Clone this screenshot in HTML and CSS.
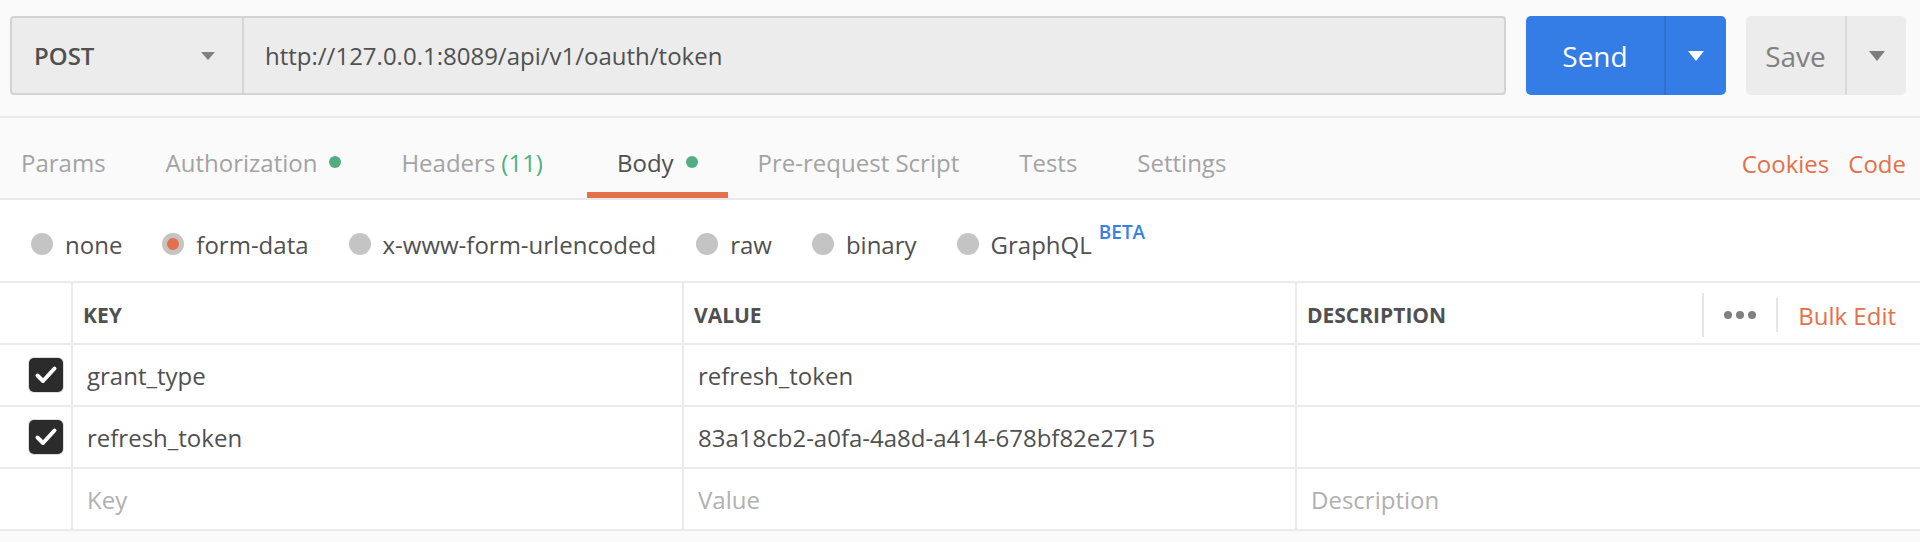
FILE: index.html
```html
<!DOCTYPE html>
<html lang="en">
<head>
<meta charset="utf-8">
<title>Request</title>
<link rel="stylesheet" href="styles.css">
</head>
<body>
<div class="app">
  <div class="request-bar">
    <div class="url-group">
      <div class="method">
        <span class="method-name">POST</span>
        <svg class="caret" width="14" height="8" viewBox="0 0 14 8"><path d="M0 0H14L7 8Z" fill="#808080"/></svg>
      </div>
      <div class="url">http://127.0.0.1:8089/api/v1/oauth/token</div>
    </div>
    <div class="split-btn send">
      <span class="btn-main">Send</span>
      <span class="btn-caret"><svg width="16" height="10" viewBox="0 0 16 10"><path d="M0 0H16L8 10Z" fill="#ffffff"/></svg></span>
    </div>
    <div class="split-btn save">
      <span class="btn-main">Save</span>
      <span class="btn-caret"><svg width="16" height="10" viewBox="0 0 16 10"><path d="M0 0H16L8 10Z" fill="#7d7d7d"/></svg></span>
    </div>
  </div>

  <div class="tabs">
    <div class="tab tab-first">Params</div>
    <div class="tab">Authorization<span class="dot"></span></div>
    <div class="tab">Headers <span class="count">(11)</span></div>
    <div class="tab tab-active">Body<span class="dot"></span></div>
    <div class="tab">Pre-request Script</div>
    <div class="tab">Tests</div>
    <div class="tab">Settings</div>
    <div class="tab-links">
      <span class="link">Cookies</span>
      <span class="link">Code</span>
    </div>
  </div>

  <div class="body-types">
    <div class="radio-item"><span class="radio"></span>none</div>
    <div class="radio-item"><span class="radio radio-on"></span>form-data</div>
    <div class="radio-item"><span class="radio"></span>x-www-form-urlencoded</div>
    <div class="radio-item"><span class="radio"></span>raw</div>
    <div class="radio-item"><span class="radio"></span>binary</div>
    <div class="radio-item"><span class="radio"></span>GraphQL<sup class="beta">BETA</sup></div>
  </div>

  <div class="kv-table">
    <div class="cell cell-check head"></div>
    <div class="cell head">KEY</div>
    <div class="cell head">VALUE</div>
    <div class="cell head cell-last head-desc">
      <span>DESCRIPTION</span>
      <div class="head-actions">
        <span class="sep"></span>
        <svg class="more" width="32" height="10" viewBox="0 0 32 10"><circle cx="4" cy="5" r="4" fill="#808080"/><circle cx="16" cy="5" r="4" fill="#808080"/><circle cx="28" cy="5" r="4" fill="#808080"/></svg>
        <span class="sep sep-short"></span>
        <span class="bulk">Bulk Edit</span>
      </div>
    </div>

    <div class="cell cell-check"><span class="checkbox"><svg width="34" height="34" viewBox="0 0 34 34"><path d="M8.5 17.5L14 23L25.5 10.5" fill="none" stroke="#ffffff" stroke-width="4" stroke-linecap="round" stroke-linejoin="round"/></svg></span></div>
    <div class="cell">grant_type</div>
    <div class="cell">refresh_token</div>
    <div class="cell cell-last"></div>

    <div class="cell cell-check"><span class="checkbox"><svg width="34" height="34" viewBox="0 0 34 34"><path d="M8.5 17.5L14 23L25.5 10.5" fill="none" stroke="#ffffff" stroke-width="4" stroke-linecap="round" stroke-linejoin="round"/></svg></span></div>
    <div class="cell">refresh_token</div>
    <div class="cell">83a18cb2-a0fa-4a8d-a414-678bf82e2715</div>
    <div class="cell cell-last"></div>

    <div class="cell cell-check"></div>
    <div class="cell placeholder">Key</div>
    <div class="cell placeholder">Value</div>
    <div class="cell cell-last placeholder">Description</div>
  </div>
</div>
</body>
</html>
```

FILE: styles.css
```css
* { box-sizing: border-box; }

html, body {
  margin: 0;
  padding: 0;
}

body {
  background: #fafafa;
  font-family: "Open Sans", "Noto Sans", "Liberation Sans", sans-serif;
  color: #505050;
  width: 1920px;
  height: 542px;
  overflow: hidden;
}

.app {
  display: flex;
  flex-direction: column;
}

/* ---------- request bar ---------- */
.request-bar {
  height: 118px;
  display: flex;
  align-items: flex-start;
  padding: 16px 14px 0 10px;
  border-bottom: 2px solid #e9e9e9;
  background: #fafafa;
}

.url-group {
  flex: 1;
  height: 79px;
  display: flex;
  background: #ececec;
  border: 2px solid #d3d3d3;
  border-radius: 4px;
}

.method {
  width: 232px;
  display: flex;
  align-items: center;
  justify-content: space-between;
  padding: 0 27px 0 22px;
  border-right: 2px solid #d6d6d6;
}

.method-name {
  font-size: 24px;
  font-weight: 600;
  color: #505050;
}

.url {
  flex: 1;
  display: flex;
  align-items: center;
  padding-left: 21px;
  font-size: 24px;
  color: #505050;
}

.split-btn {
  height: 79px;
  display: flex;
  border-radius: 5px;
  margin-left: 20px;
  font-size: 28px;
}

.split-btn .btn-main {
  display: flex;
  align-items: center;
  justify-content: center;
}

.split-btn .btn-caret {
  display: flex;
  align-items: center;
  justify-content: center;
}

.send {
  width: 200px;
  background: #357de6;
  color: #ffffff;
}
.send .btn-main { width: 138px; }
.send .btn-caret { flex: 1; border-left: 2px solid #2f71d2; }

.save {
  width: 160px;
  background: #ececec;
  color: #808080;
}
.save .btn-main { width: 99px; }
.save .btn-caret { flex: 1; border-left: 2px solid #d9d9d9; }

/* ---------- tabs ---------- */
.tabs {
  height: 82px;
  display: flex;
  align-items: stretch;
  border-bottom: 2px solid #e9e9e9;
  background: #fafafa;
  padding-right: 14px;
}

.tab {
  position: relative;
  display: flex;
  align-items: center;
  padding: 8px 30px 0;
  font-size: 24px;
  color: #a3a3a3;
  white-space: nowrap;
}

.tab-first { padding-left: 21px; }

.tab .count { color: #4faf7f; margin-left: 6px; }

.tab .dot {
  width: 12px;
  height: 12px;
  border-radius: 50%;
  background: #52ad80;
  margin-left: 12px;
}

.tab-active {
  color: #4f4f4f;
  margin-left: 14px;
}

.tab-active::after {
  content: "";
  position: absolute;
  left: 0;
  right: 0;
  bottom: 0;
  height: 6px;
  background: #e4704b;
}

.tab-links {
  margin-left: auto;
  display: flex;
  align-items: center;
  gap: 19px;
  padding-top: 10px;
}

.link {
  font-size: 24px;
  color: #e4704b;
}

/* ---------- body type radios ---------- */
.body-types {
  height: 83px;
  display: flex;
  align-items: center;
  gap: 40px;
  padding: 7px 0 0 31px;
  background: #ffffff;
  border-bottom: 2px solid #ebebeb;
}

.radio-item {
  display: flex;
  align-items: center;
  font-size: 24px;
  color: #505050;
  white-space: nowrap;
}

.radio {
  width: 22px;
  height: 22px;
  border-radius: 50%;
  background: #c4c4c4;
  margin-right: 12px;
  position: relative;
}

.radio-on {
  background: #e4704b;
  border: 5px solid #c4c4c4;
}

.beta {
  font-size: 19px;
  font-weight: 600;
  color: #3a7fe6;
  margin-left: 7px;
  position: relative;
  top: -12px;
  vertical-align: baseline;
  line-height: 1;
}

/* ---------- key / value table ---------- */
.kv-table {
  display: grid;
  grid-template-columns: 73px 611px 613px 1fr;
  grid-auto-rows: 62px;
  background: #ffffff;
}

.cell {
  display: flex;
  align-items: center;
  padding-left: 14px;
  font-size: 24px;
  color: #505050;
  border-right: 2px solid #ebebeb;
  border-bottom: 2px solid #ebebeb;
  white-space: nowrap;
}

.cell-last { border-right: none; }

.cell-check {
  padding-left: 0;
  justify-content: flex-end;
  padding-right: 8px;
}

.head {
  font-size: 21px;
  font-weight: 700;
  color: #505050;
  padding-left: 10px;
  padding-top: 4px;
}

.head-desc {
  justify-content: space-between;
  padding-right: 24px;
}

.head-actions {
  display: flex;
  align-items: center;
  height: 100%;
}

.sep {
  width: 2px;
  height: 44px;
  background: #e6e6e6;
  margin-right: 20px;
}

.sep-short {
  height: 34px;
  margin-left: 20px;
}

.more { display: block; }

.bulk {
  font-size: 24px;
  font-weight: 400;
  color: #e4704b;
}

.checkbox {
  width: 34px;
  height: 34px;
  border-radius: 5px;
  background: #2b2b2b;
  box-shadow: 0 0 0 1px #dedede;
  display: flex;
}

.placeholder { color: #b0b0b0; }
```
